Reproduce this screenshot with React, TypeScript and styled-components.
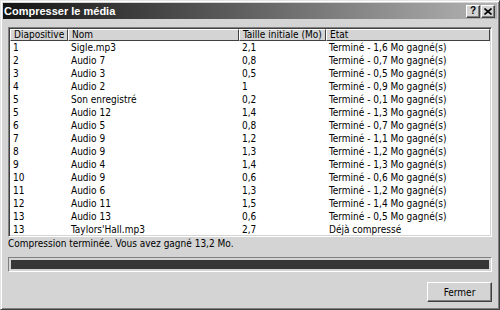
import styled, {createGlobalStyle} from "styled-components";

const GlobalStyle = createGlobalStyle`
    html, body {
        margin: 0;
        padding: 0;
        background: #d4d4d4;
    }
    body {
        font-family: "DejaVu Sans Condensed", "Liberation Sans", Tahoma, sans-serif;
        font-size: 10px;
        color: #000;
    }
`;

const Window = styled.div`
    width: 500px;
    height: 310px;
    box-sizing: border-box;
    padding: 2px;
    display: flex;
    flex-direction: column;
    background: #d4d4d4;
    border-top: 1px solid #e4e4e4;
    border-left: 1px solid #e4e4e4;
    border-right: 1px solid #404040;
    border-bottom: 1px solid #404040;
    box-shadow: inset 1px 1px 0 #ffffff, inset -1px -1px 0 #808080;
`;

const TitleBar = styled.div`
    height: 16px;
    display: flex;
    align-items: center;
    justify-content: space-between;
    padding: 0 2px 0 1px;
    background: linear-gradient(to right, #141414 0%, #5a5a5a 45%, #b4b4b4 100%);
`;

const Title = styled.span`
    color: #fff;
    font-family: "Liberation Sans", Tahoma, sans-serif;
    font-weight: bold;
    font-size: 11px;
`;

const CaptionButtons = styled.div`
    display: flex;
    gap: 1px;
`;

const CaptionButton = styled.div`
    width: 14px;
    height: 13px;
    box-sizing: border-box;
    background: #d4d4d4;
    border-top: 1px solid #fff;
    border-left: 1px solid #fff;
    border-right: 1px solid #404040;
    border-bottom: 1px solid #404040;
    box-shadow: inset -1px -1px 0 #808080;
    display: flex;
    align-items: center;
    justify-content: center;
    font-family: "Liberation Sans", sans-serif;
    font-weight: bold;
    font-size: 10px;
    line-height: 1;
`;

const Body = styled.div`
    flex: 1;
    display: flex;
    flex-direction: column;
    padding: 8px 5px 0 5px;
`;

const ListView = styled.div`
    background: #fff;
    border-top: 1px solid #808080;
    border-left: 1px solid #808080;
    border-right: 1px solid #fff;
    border-bottom: 1px solid #fff;
    box-shadow: inset 1px 1px 0 #404040, inset -1px -1px 0 #d4d4d4;
    padding: 1px;
    height: 210px;
    box-sizing: border-box;
    overflow: hidden;
`;

const Table = styled.table`
    border-collapse: separate;
    border-spacing: 0;
    width: 100%;
    table-layout: fixed;
`;

const HeadCell = styled.th<{ $w?: number }>`
    width: ${p => (p.$w ? `${p.$w}px` : "auto")};
    height: 12px;
    box-sizing: border-box;
    padding: 0 3px;
    text-align: left;
    font-weight: normal;
    background: #d4d4d4;
    border-top: 1px solid #fff;
    border-left: 1px solid #fff;
    border-right: 1px solid #404040;
    border-bottom: 1px solid #404040;
    white-space: nowrap;
    overflow: hidden;
    line-height: 10px;
`;

const Cell = styled.td`
    height: 13px;
    padding: 0 3px;
    white-space: nowrap;
    overflow: hidden;
    line-height: 13px;
`;

const Status = styled.div`
    height: 13px;
    line-height: 13px;
`;

const Progress = styled.div`
    margin-top: 7px;
    height: 15px;
    box-sizing: border-box;
    border-top: 1px solid #808080;
    border-left: 1px solid #808080;
    border-right: 1px solid #fff;
    border-bottom: 1px solid #fff;
    padding: 2px;
    background: #d4d4d4;
`;

const ProgressFill = styled.div`
    height: 100%;
    background: #363636;
`;

const Footer = styled.div`
    display: flex;
    justify-content: flex-end;
    margin-top: 10px;
`;

const Button = styled.button`
    width: 65px;
    height: 20px;
    box-sizing: border-box;
    font-family: inherit;
    font-size: 10px;
    color: #000;
    background: #d4d4d4;
    border-top: 1px solid #fff;
    border-left: 1px solid #fff;
    border-right: 1px solid #404040;
    border-bottom: 1px solid #404040;
    box-shadow: inset -1px -1px 0 #808080;
    padding: 0;
`;

const rows: [string, string, string, string][] = [
    ["1", "Sigle.mp3", "2,1", "Terminé - 1,6 Mo gagné(s)"],
    ["2", "Audio 7", "0,8", "Terminé - 0,7 Mo gagné(s)"],
    ["3", "Audio 3", "0,5", "Terminé - 0,5 Mo gagné(s)"],
    ["4", "Audio 2", "1", "Terminé - 0,9 Mo gagné(s)"],
    ["5", "Son enregistré", "0,2", "Terminé - 0,1 Mo gagné(s)"],
    ["5", "Audio 12", "1,4", "Terminé - 1,3 Mo gagné(s)"],
    ["6", "Audio 5", "0,8", "Terminé - 0,7 Mo gagné(s)"],
    ["7", "Audio 9", "1,2", "Terminé - 1,1 Mo gagné(s)"],
    ["8", "Audio 9", "1,3", "Terminé - 1,2 Mo gagné(s)"],
    ["9", "Audio 4", "1,4", "Terminé - 1,3 Mo gagné(s)"],
    ["10", "Audio 9", "0,6", "Terminé - 0,6 Mo gagné(s)"],
    ["11", "Audio 6", "1,3", "Terminé - 1,2 Mo gagné(s)"],
    ["12", "Audio 11", "1,5", "Terminé - 1,4 Mo gagné(s)"],
    ["13", "Audio 13", "0,6", "Terminé - 0,5 Mo gagné(s)"],
    ["13", "Taylors'Hall.mp3", "2,7", "Déjà compressé"],
];

const App = () => {
    return (
        <>
            <GlobalStyle />
            <Window>
                <TitleBar>
                    <Title>Compresser le média</Title>
                    <CaptionButtons>
                        <CaptionButton>?</CaptionButton>
                        <CaptionButton>
                            <svg width="8" height="7" viewBox="0 0 8 7">
                                <path d="M0.5 0.5 L7.5 6.5 M7.5 0.5 L0.5 6.5" stroke="#000" strokeWidth="1.6" />
                            </svg>
                        </CaptionButton>
                    </CaptionButtons>
                </TitleBar>
                <Body>
                    <ListView>
                        <Table>
                            <thead>
                                <tr>
                                    <HeadCell $w={58}>Diapositive</HeadCell>
                                    <HeadCell $w={171}>Nom</HeadCell>
                                    <HeadCell $w={87}>Taille initiale (Mo)</HeadCell>
                                    <HeadCell>État</HeadCell>
                                </tr>
                            </thead>
                            <tbody>
                                {rows.map((r, i) => (
                                    <tr key={i}>
                                        {r.map((c, j) => (
                                            <Cell key={j}>{c}</Cell>
                                        ))}
                                    </tr>
                                ))}
                            </tbody>
                        </Table>
                    </ListView>
                    <Status>Compression terminée. Vous avez gagné 13,2 Mo.</Status>
                    <Progress>
                        <ProgressFill />
                    </Progress>
                    <Footer>
                        <Button>Fermer</Button>
                    </Footer>
                </Body>
            </Window>
        </>
    );
};

export default App;
